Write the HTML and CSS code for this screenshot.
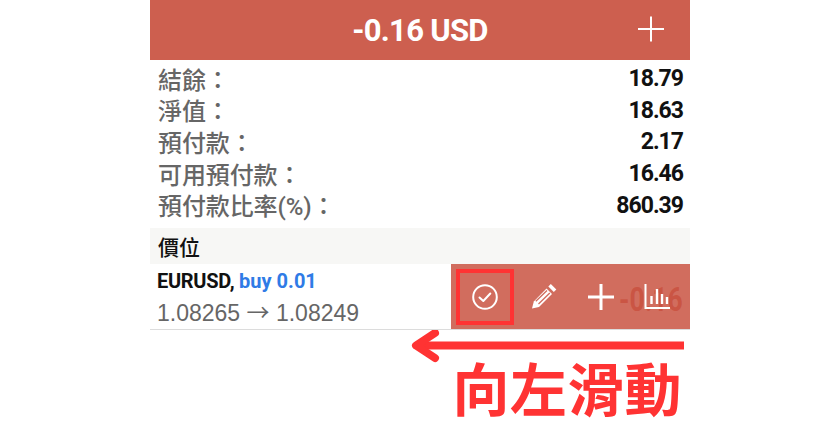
FILE: index.html
```html
<!DOCTYPE html>
<html lang="zh-Hant">
<head>
<meta charset="utf-8">
<title>向左滑動</title>
<link rel="stylesheet" href="styles.css">
</head>
<body>
<main class="phone">
  <header class="top">
    <span class="top-title">-0.16 USD</span>
    <svg class="top-plus" width="30" height="30" viewBox="0 0 30 30"><path d="M15 2.500V27.500M2 15H28" stroke="#fff" stroke-width="2" fill="none"/></svg>
  </header>
  <section class="summary">
    <div class="line"><span class="label">結餘：</span><span class="value">18.79</span></div>
    <div class="line"><span class="label">淨值：</span><span class="value">18.63</span></div>
    <div class="line"><span class="label">預付款：</span><span class="value">2.17</span></div>
    <div class="line"><span class="label">可用預付款：</span><span class="value">16.46</span></div>
    <div class="line"><span class="label">預付款比率(%)：</span><span class="value">860.39</span></div>
  </section>
  <div class="section-head">價位</div>
  <div class="position">
    <div class="pos-info">
      <div class="pos-name">EURUSD, <span class="pos-side">buy 0.01</span></div>
      <div class="pos-price">1.08265 <span class="pos-arrow">→</span> 1.08249</div>
    </div>
    <div class="pos-pl">-0.16</div>
    <div class="swipe">
      <span class="act act-check">
        <svg width="28" height="28" viewBox="0 0 28 28"><circle cx="14" cy="14" r="11.800" stroke="#fff" stroke-width="2" fill="none"/><path d="M8.500 14.500l3.800 3.500 7-7.500" stroke="#fff" stroke-width="2" fill="none" stroke-linecap="round" stroke-linejoin="round"/></svg>
      </span>
      <span class="act">
        <svg width="28" height="28" viewBox="0 0 28 28"><path d="M3 25.500l1.800-7L17.500 5.500l5.500 5.500L10 24z" fill="#fff"/><path d="M6.800 18.200L18 7.500M9.500 21L20.800 10" stroke="#d16d5e" stroke-width="1.300" fill="none"/><path d="M19.300 3.500l2.500-2.500 5.500 5.500-2.500 2.500z" fill="#fff"/></svg>
      </span>
      <span class="act">
        <svg width="28" height="28" viewBox="0 0 28 28"><path d="M14 1V27M1 14H27" stroke="#fff" stroke-width="3" fill="none"/></svg>
      </span>
      <span class="act act-chart">
        <svg width="28" height="28" viewBox="0 0 28 28"><path d="M2.500 1V25H27" stroke="#fff" stroke-width="2" fill="none"/><path d="M8.500 13V21M14 6V21M19 11V21M24 14V21" stroke="#fff" stroke-width="2.400" fill="none"/></svg>
      </span>
    </div>
  </div>
  <div class="hint">
    <svg class="hint-arrow" width="274" height="38" viewBox="0 0 274 38"><path d="M273 15.500H6" stroke="#ff3333" stroke-width="8" fill="none"/><path d="M24 3L5 15.500 24 28" stroke="#ff3333" stroke-width="8" fill="none" stroke-linecap="round" stroke-linejoin="round"/></svg>
    <div class="hint-text">向左滑動</div>
  </div>
</main>
</body>
</html>
```
FILE: styles.css
```css
* { box-sizing: border-box; }
html, body { margin: 0; padding: 0; background: #fff; }
body { width: 840px; height: 436px; overflow: hidden; font-family: Roboto, "Noto Sans CJK TC", sans-serif; }
.phone { width: 540px; margin-left: 150px; }
.top { position: relative; height: 60px; background: #cd5f4f; display: flex; align-items: center; justify-content: center; }
.top-title { color: #fff; font-size: 31px; font-weight: 700; letter-spacing: -0.7px; }
.top-plus { position: absolute; right: 24px; top: 14px; }
.summary { padding: 3px 7px 0 8px; height: 168px; }
.line { display: flex; justify-content: space-between; align-items: center; height: 31.600px; }
.label { color: #666; font-size: 24px; font-weight: 500; margin-top: -1px; letter-spacing: -0.1px; }
.value { color: #111; font-size: 23px; font-weight: 700; letter-spacing: -1px; }
.section-head { height: 36px; background: #f7f7f5; padding-left: 8px; display: flex; align-items: center; font-size: 21px; font-weight: 500; color: #111; }
.position { position: relative; height: 66px; border-bottom: 1px solid #dcdcdc; padding: 4px 8px 0; display: flex; justify-content: space-between; }
.pos-name { font-size: 20px; font-weight: 700; color: #111; letter-spacing: -0.3px; line-height: 26px; margin-left: -1px; }
.pos-side { color: #2f7be6; letter-spacing: 0; }
.pos-price { font-size: 23px; color: #666; line-height: 30px; margin-top: 2px; margin-left: -1px; font-family: "Liberation Sans", sans-serif; }
.pos-arrow { font-family: "Noto Sans CJK TC", sans-serif; }
.pos-pl { color: #cd5f4f; font-size: 34px; font-weight: 700; align-self: center; transform: scaleX(0.78); transform-origin: right center; margin-right: -1px; }
.swipe { position: absolute; right: 0; top: 0; bottom: 0; width: 239px; background: rgba(201, 84, 66, 0.85); display: flex; align-items: center; padding-left: 5px; }
.act { display: flex; align-items: center; justify-content: center; width: 58px; height: 56px; }
.act-check { border: 4px solid #ff3333; }
.act-chart svg { margin-left: -4px; }
.hint { display: flex; flex-direction: column; align-items: flex-end; }
.hint-arrow { display: block; margin-right: 5px; }
.hint-text { color: #ff3333; font-size: 57px; font-weight: 700; line-height: 66px; margin-right: 8px; margin-top: -15px; letter-spacing: 0.4px; font-family: "Noto Sans CJK TC", sans-serif; }
```
